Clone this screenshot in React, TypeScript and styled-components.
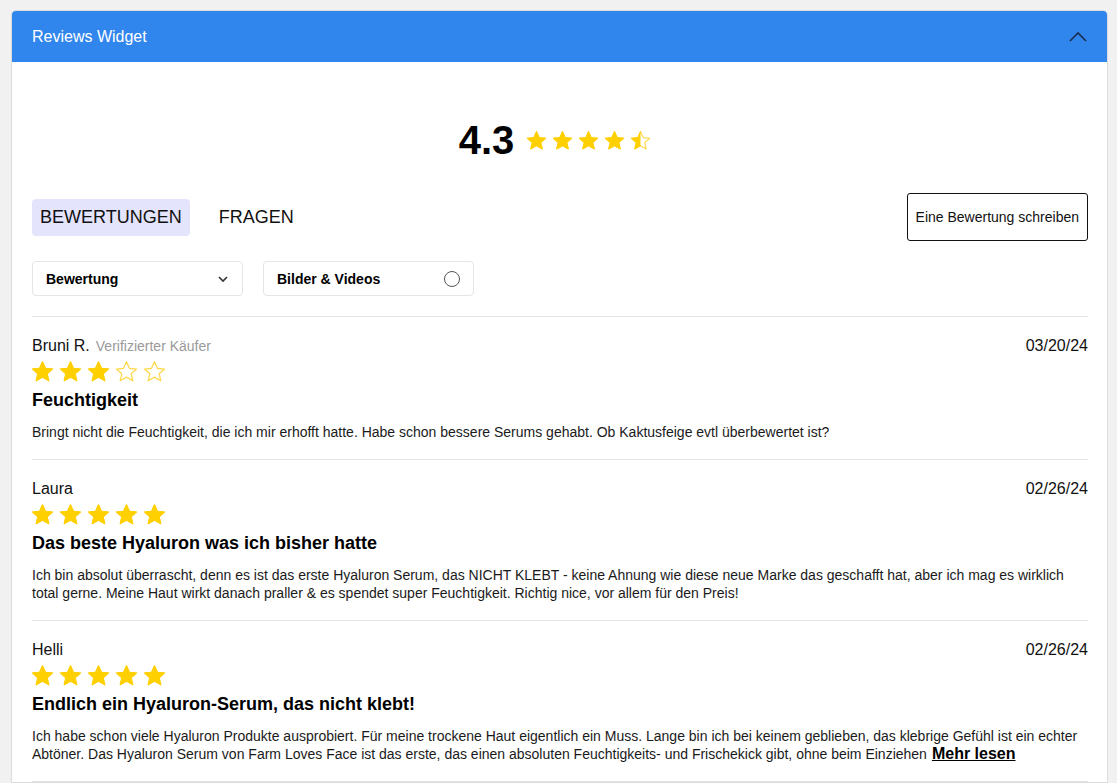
import React, { useId } from 'react';
import styled, { createGlobalStyle } from 'styled-components';

type reviewType = {
  name: string;
  verified?: boolean;
  date: string;
  rating: number;
  title: string;
  body: string;
  more?: boolean;
};

const reviews: reviewType[] = [
  {
    name: 'Bruni R.',
    verified: true,
    date: '03/20/24',
    rating: 3,
    title: 'Feuchtigkeit',
    body: 'Bringt nicht die Feuchtigkeit, die ich mir erhofft hatte. Habe schon bessere Serums gehabt. Ob Kaktusfeige evtl überbewertet ist?',
  },
  {
    name: 'Laura',
    date: '02/26/24',
    rating: 5,
    title: 'Das beste Hyaluron was ich bisher hatte',
    body: 'Ich bin absolut überrascht, denn es ist das erste Hyaluron Serum, das NICHT KLEBT - keine Ahnung wie diese neue Marke das geschafft hat, aber ich mag es wirklich total gerne. Meine Haut wirkt danach praller & es spendet super Feuchtigkeit. Richtig nice, vor allem für den Preis!',
  },
  {
    name: 'Helli',
    date: '02/26/24',
    rating: 5,
    title: 'Endlich ein Hyaluron-Serum, das nicht klebt!',
    body: 'Ich habe schon viele Hyaluron Produkte ausprobiert. Für meine trockene Haut eigentlich ein Muss. Lange bin ich bei keinem geblieben, das klebrige Gefühl ist ein echter Abtöner. Das Hyaluron Serum von Farm Loves Face ist das erste, das einen absoluten Feuchtigkeits- und Frischekick gibt, ohne beim Einziehen',
    more: true,
  },
];

const GlobalStyle = createGlobalStyle`
  html, body {
    margin: 0;
    padding: 0;
    background: #f1f1f1;
    font-family: "Liberation Sans", Arial, sans-serif;
    color: #111;
  }
`;

const Page = styled.div`
  padding: 10px 9px 0 11px;
  height: 783px;
  overflow: hidden;
  box-sizing: border-box;
`;

const Card = styled.div`
  background: #fff;
  border: 1px solid #dcdcdc;
  border-radius: 5px 5px 0 0;
  overflow: hidden;
`;

const Header = styled.div`
  height: 51px;
  background: #3086ed;
  display: flex;
  align-items: center;
  justify-content: space-between;
  padding: 0 20px 0 20px;
  color: #fff;
  font-size: 16px;
`;

const Body = styled.div`
  padding: 54px 19px 0 20px;
`;

const Summary = styled.div`
  display: flex;
  align-items: center;
  justify-content: center;
  gap: 12px;
  height: 48px;
  padding-right: 10px;
`;

const Score = styled.span`
  font-size: 40px;
  font-weight: 700;
  color: #000;
`;

const StarRow = styled.div<{ $gap: number }>`
  display: flex;
  gap: ${(p) => p.$gap}px;
`;

const Toolbar = styled.div`
  display: flex;
  align-items: center;
  justify-content: space-between;
  margin-top: 29px;
`;

const Tabs = styled.div`
  display: flex;
  gap: 21px;
`;

const Tab = styled.button<{ $active?: boolean }>`
  font-family: inherit;
  font-size: 18px;
  color: #111;
  border: none;
  border-radius: 4px;
  height: 37px;
  padding: 0 8px;
  background: ${(p) => (p.$active ? '#e4e4fc' : 'transparent')};
  cursor: pointer;
`;

const WriteButton = styled.button`
  font-family: inherit;
  font-size: 14px;
  color: #111;
  height: 48px;
  padding: 0 8px;
  background: #fff;
  border: 1px solid #111;
  border-radius: 3px;
`;

const Filters = styled.div`
  display: flex;
  gap: 20px;
  margin-top: 20px;
  padding-bottom: 20px;
  border-bottom: 1px solid #e3e3e3;
`;

const Filter = styled.div`
  width: 211px;
  height: 35px;
  box-sizing: border-box;
  border: 1px solid #e5e5e5;
  border-radius: 4px;
  display: flex;
  align-items: center;
  justify-content: space-between;
  padding: 0 13px 0 13px;
  font-size: 14px;
  font-weight: 700;
  color: #000;
`;

const Radio = styled.span`
  width: 14px;
  height: 14px;
  border: 1.5px solid #555;
  border-radius: 50%;
`;

const Review = styled.div`
  padding: 19px 0 18px;
  border-bottom: 1px solid #e3e3e3;
`;

const ReviewTop = styled.div`
  display: flex;
  justify-content: space-between;
  align-items: center;
  line-height: 20px;
  font-size: 16px;
  color: #111;
`;

const Verified = styled.span`
  font-size: 14px;
  color: #9a9a9a;
  margin-left: 6px;
`;

const ReviewStars = styled.div`
  margin-top: 4px;
  margin-left: -1px;
`;

const Title = styled.h3`
  margin: 6px 0 0;
  font-size: 18px;
  line-height: 22px;
  font-weight: 700;
  color: #000;
`;

const Text = styled.p`
  margin: 12px 0 0;
  font-size: 14px;
  line-height: 18px;
  color: #1a1a1a;
`;

const More = styled.a`
  font-size: 16px;
  line-height: 17px;
  font-weight: 700;
  color: #000;
  text-decoration: underline;
  margin-left: 5px;
`;

const STAR = 'M12 1.8l3.1 6.9 7.4.7-5.6 5 1.7 7.3L12 17.9l-6.6 3.8 1.7-7.3-5.6-5 7.4-.7z';

const Star = ({ fill, size }: { fill: number; size: number }) => {
  const id = useId();
  return (
    <svg width={size} height={size} viewBox="0 0 24 24">
      <defs>
        <clipPath id={id}>
          <rect x="0" y="0" width={24 * fill} height="24" />
        </clipPath>
      </defs>
      <path d={STAR} fill="#fff" stroke="#ffd84a" strokeWidth="1.3" strokeLinejoin="round" />
      {fill > 0 && <path d={STAR} fill="#ffd000" stroke="#ffd000" strokeWidth="1" strokeLinejoin="round" clipPath={`url(#${id})`} />}
    </svg>
  );
};

const Stars = ({ value, size, gap }: { value: number; size: number; gap: number }) => (
  <StarRow $gap={gap}>
    {[0, 1, 2, 3, 4].map((i) => (
      <Star key={i} size={size} fill={Math.max(0, Math.min(1, value - i))} />
    ))}
  </StarRow>
);

const App = () => {
  return (
    <Page>
      <GlobalStyle />
      <Card>
        <Header>
          <span>Reviews Widget</span>
          <svg width="18" height="11" viewBox="0 0 18 11">
            <path d="M1 10 L9 2 L17 10" fill="none" stroke="#1b2d4f" strokeWidth="1.6" />
          </svg>
        </Header>
        <Body>
          <Summary>
            <Score>4.3</Score>
            <Stars value={4.5} size={21} gap={5} />
          </Summary>
          <Toolbar>
            <Tabs>
              <Tab $active>BEWERTUNGEN</Tab>
              <Tab>FRAGEN</Tab>
            </Tabs>
            <WriteButton>Eine Bewertung schreiben</WriteButton>
          </Toolbar>
          <Filters>
            <Filter>
              <span>Bewertung</span>
              <svg width="12" height="8" viewBox="0 0 12 8">
                <path d="M2 2 L6 6 L10 2" fill="none" stroke="#333" strokeWidth="1.6" />
              </svg>
            </Filter>
            <Filter>
              <span>Bilder &amp; Videos</span>
              <Radio />
            </Filter>
          </Filters>
          {reviews.map((r) => (
            <Review key={r.name}>
              <ReviewTop>
                <span>
                  {r.name}
                  {r.verified && <Verified>Verifizierter Käufer</Verified>}
                </span>
                <span>{r.date}</span>
              </ReviewTop>
              <ReviewStars>
                <Stars value={r.rating} size={23} gap={5} />
              </ReviewStars>
              <Title>{r.title}</Title>
              <Text>
                {r.body}
                {r.more && <More>Mehr lesen</More>}
              </Text>
            </Review>
          ))}
        </Body>
      </Card>
    </Page>
  );
};

export default App;
